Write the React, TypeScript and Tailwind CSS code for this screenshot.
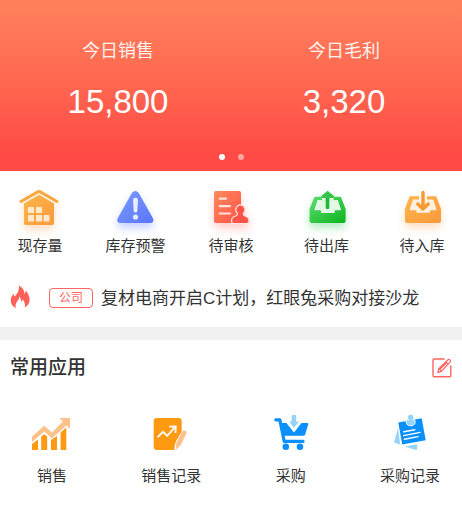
import React, { useState } from 'react';

type Item = { label: string; icon: React.ReactNode };

// Icons of the shortcut row
const StockIcon = () => (
  <svg viewBox="0 0 48 48" className="w-12 h-12 drop-shadow-[0_5px_4px_rgba(255,160,80,0.35)]">
    <defs>
      <linearGradient id="stock" x1="0" y1="0" x2="1" y2="1">
        <stop offset="0" stopColor="#ffb74a" />
        <stop offset="1" stopColor="#f99a3c" />
      </linearGradient>
    </defs>
    <path d="M5 17.5 L22.2 7.6 Q23 7.2 23.8 7.6 L41 17.5" fill="none" stroke="#fba93f" strokeWidth="3" strokeLinecap="round" strokeLinejoin="round" />
    <path d="M8 19.5 L23 10.8 L38 19.5 V39 Q38 41 36 41 H10 Q8 41 8 39 Z" fill="url(#stock)" />
    <g fill="#fff" fillOpacity="0.75">
      <rect x="12" y="23" width="6" height="6" rx="0.6" />
      <rect x="20" y="23" width="6" height="6" rx="0.6" />
      <rect x="12" y="31" width="6" height="6.5" rx="0.6" />
      <rect x="20" y="31" width="6" height="6.5" rx="0.6" />
      <rect x="27.5" y="31" width="6" height="6.5" rx="0.6" />
    </g>
  </svg>
);

const WarningIcon = () => (
  <svg viewBox="0 0 48 48" className="w-12 h-12 drop-shadow-[0_5px_4px_rgba(90,120,255,0.35)]">
    <defs>
      <linearGradient id="warn" x1="0" y1="0" x2="1" y2="1">
        <stop offset="0" stopColor="#7d9bff" />
        <stop offset="1" stopColor="#5a75fb" />
      </linearGradient>
    </defs>
    <path d="M20 8.8 Q23.3 5 26.6 8.8 L40.8 34 Q42.6 38.6 38.4 39 H8.2 Q4 38.6 5.8 34 Z" fill="url(#warn)" />
    <path d="M21 16.2 Q21 13.8 23.5 13.8 Q26 13.8 26 16.2 L25.3 27 Q25.1 28.6 23.5 28.6 Q21.9 28.6 21.7 27 Z" fill="#fff" fillOpacity="0.85" />
    <circle cx="23.5" cy="33" r="2.6" fill="#fff" fillOpacity="0.85" />
  </svg>
);

const ReviewIcon = () => (
  <svg viewBox="0 0 48 48" className="w-12 h-12 drop-shadow-[0_5px_4px_rgba(255,90,80,0.3)]">
    <defs>
      <linearGradient id="review" x1="0" y1="0" x2="1" y2="1">
        <stop offset="0" stopColor="#ff8a5c" />
        <stop offset="1" stopColor="#ff5347" />
      </linearGradient>
    </defs>
    <rect x="7" y="7" width="27" height="32" rx="2" fill="url(#review)" />
    <g stroke="#fff" strokeOpacity="0.8" strokeWidth="2.2" strokeLinecap="round">
      <path d="M12.8 14.7 H19" />
      <path d="M12.8 22.2 H23" />
      <path d="M12.8 29.5 H23" />
    </g>
    <path
      d="M33.4 21.5 A4.2 4.2 0 0 1 35.8 29 V30.6 Q36 31.6 37.4 32.3 L39.8 33.5 Q41.3 34.3 41.3 36 V37.6 Q41.3 39 40 39 H26.5 Q25.2 39 25.2 37.6 V36 Q25.2 34.3 26.7 33.5 L29.3 32.3 Q30.8 31.6 31 30.6 V29 A4.2 4.2 0 0 1 33.4 21.5 Z"
      fill="#ff5347"
      stroke="#ffe3df"
      strokeWidth="2.4"
      paintOrder="stroke"
    />
  </svg>
);

const StockOutIcon = () => (
  <svg viewBox="0 0 48 48" className="w-12 h-12 drop-shadow-[0_5px_4px_rgba(40,200,80,0.35)]">
    <defs>
      <linearGradient id="out" x1="0" y1="0" x2="1" y2="1">
        <stop offset="0" stopColor="#5ddd70" />
        <stop offset="1" stopColor="#0cb41d" />
      </linearGradient>
    </defs>
    <path d="M13.5 17 H35.5 L38 28 V31 H11 V28 Z" fill="#e0f8e4" />
    <path d="M12.5 12.8 H19 V16 H14.6 L11.4 25.2 Q11.2 26.3 12.2 26.3 H17.2 Q18 26.3 18 27.2 V29 H31.6 V27.2 Q31.6 26.3 32.4 26.3 H37.2 Q38.2 26.3 38 25.2 L34.8 16 H30.5 V12.8 H36.5 Q37.8 12.8 38.3 14 L42.6 25 V37 Q42.6 39 40.6 39 H8.6 Q6.6 39 6.6 37 V25 L10.9 14 Q11.3 12.8 12.5 12.8 Z" fill="url(#out)" />
    <path d="M24.5 23.5 V11" stroke="#22b63a" strokeWidth="3.6" strokeLinecap="round" />
    <path d="M24.6 6.8 L31 12 Q31.3 14 29.5 14 H19.7 Q18 14 18.3 12 Z" fill="#36c24b" />
  </svg>
);

const StockInIcon = () => (
  <svg viewBox="0 0 48 48" className="w-12 h-12 drop-shadow-[0_5px_4px_rgba(255,160,80,0.35)]">
    <defs>
      <linearGradient id="in" x1="0" y1="0" x2="1" y2="1">
        <stop offset="0" stopColor="#ffb54a" />
        <stop offset="1" stopColor="#f99a3e" />
      </linearGradient>
    </defs>
    <path d="M13.5 16 H36.5 L39 28 V31 H11 V28 Z" fill="#fdf0de" />
    <path d="M13 12.3 H21 V15.6 H15 L11.8 25.2 Q11.6 26.3 12.6 26.3 H17.6 Q18.4 26.3 18.4 27.2 V28.8 H32 V27.2 Q32 26.3 32.8 26.3 H37.6 Q38.6 26.3 38.4 25.2 L35.2 15.6 H29 V12.3 H37 Q38.2 12.3 38.7 13.5 L43 25 V37 Q43 39 41 39 H9 Q7 39 7 37 V25 L11.3 13.5 Q11.8 12.3 13 12.3 Z" fill="url(#in)" />
    <path d="M25 8.5 V24 M19.8 20 L25 25 L30.2 20" fill="none" stroke="#f79a33" strokeWidth="3.4" strokeLinecap="round" strokeLinejoin="round" />
  </svg>
);

// Icons of the common apps
const SalesIcon = () => (
  <svg viewBox="0 0 48 40" className="w-12 h-10">
    <path d="M4 32 L10 27.6 V38 H4 Z M13.2 24.6 L16.2 22.2 L19.2 24.6 V38 H13.2 Z M23 28 L29 24 V38 H23 Z M32.6 20.4 L38.3 15.4 V38 H32.6 Z" fill="#fd9a12" />
    <path d="M31.3 6 H42 V16.7 L38.6 13.2 L24 26.2 L16.2 19.4 L4 30 V24.6 L16.2 13.8 L24 20.6 L34.8 9.6 Z" fill="#ffc18c" />
  </svg>
);

const SalesRecordIcon = () => (
  <svg viewBox="0 0 48 40" className="w-12 h-10">
    <path d="M9.7 6 H31.7 Q34.7 6 34.7 9 V19.6 L29.4 28.4 Q27.4 32 27.4 38 H9.7 Q6.7 38 6.7 35 V9 Q6.7 6 9.7 6 Z" fill="#fd9a12" />
    <path d="M10.6 25.2 L16 19.8 L20.2 23.8 L28 15.2 M22.3 14.6 L28.7 14.4 L28.5 21" fill="none" stroke="#fff" strokeWidth="1.8" />
    <path d="M35.2 19.6 Q36.3 18.2 38 18.8 Q40 19.8 39.5 21.2 L33.4 33.8 L29 37.4 L29.2 31 Z" fill="#ffc18c" />
  </svg>
);

const PurchaseIcon = () => (
  <svg viewBox="0 0 48 40" className="w-12 h-10">
    <path d="M8.8 7.8 H12.8 L17.2 29.4 H36" fill="none" stroke="#0a90fb" strokeWidth="3.2" strokeLinecap="round" strokeLinejoin="round" />
    <path d="M13.8 11 H19.4 L27 20.4 L34.4 11 H40.4 Q41.7 11 41.3 12.3 L38.2 22.4 Q37.8 23.8 36.4 23.8 H16.6 Z" fill="#0a90fb" />
    <circle cx="18.8" cy="34.7" r="3.3" fill="#0a90fb" />
    <circle cx="33" cy="34.7" r="3.3" fill="#0a90fb" />
    <path d="M24.6 3 H29.2 V9.6 H31.8 L26.9 16 L22.2 9.6 H24.6 Z" fill="#94d4fb" />
  </svg>
);

const PurchaseRecordIcon = () => (
  <svg viewBox="0 0 48 40" className="w-12 h-10">
    <path d="M12 16 L8 30.5 L14.2 32.6 Z" fill="#94d4fb" />
    <path d="M18.5 34.6 L31.4 32.2 L30.8 38.2 Z" fill="#94d4fb" />
    <path d="M12.3 10.5 L35.7 6.3 L39.7 28.2 L16.2 32.4 Z" fill="#0a90fb" />
    <path d="M17.8 19.8 L28.8 17.7 M17.6 23.6 L34 20.4 M18.4 27.2 L32 24.6" stroke="#fff" strokeWidth="1.4" strokeLinecap="round" />
    <g fill="#94d4fb" stroke="#fff" strokeWidth="1.6" paintOrder="stroke">
      <ellipse cx="24.7" cy="10" rx="4.2" ry="3.4" />
      <circle cx="24.7" cy="5.5" r="2.8" />
    </g>
    <path d="M23 6 H26.4 V9 H23 Z" fill="#94d4fb" />
  </svg>
);

const FlameIcon = () => (
  <svg viewBox="0 0 20 24" className="w-5 h-6 shrink-0">
    <path
      d="M9 0.5 C12.6 2.6 14.4 5 14.5 9 C15.4 8.2 15.8 7 15.6 5.2 C18.2 8.4 19.6 11.4 19.6 15 C19.6 18.6 17.4 21.2 14.8 22.6 C15.4 20 14.8 17 12.8 14.4 C12.4 15.4 11.9 16.2 11 16.8 C11.2 14.6 10.6 12.8 9.4 11.4 C9.2 14 7.8 15.6 6.6 17.2 C5.4 19 5.2 21 6 23 C2.6 21.6 0.6 18.8 0.7 15.2 C0.8 12.6 2 10.8 3.6 8.8 C3.7 10 4 10.8 4.8 11.6 C7.4 8.6 9.4 5.4 9 0.5 Z"
      fill="#ff6058"
    />
  </svg>
);

const EditIcon = () => (
  <svg viewBox="0 0 20 20" className="w-5 h-5" fill="none" stroke="#ff6560" strokeWidth="1.4" strokeLinecap="round" strokeLinejoin="round">
    <path d="M12.2 1 H2.2 Q1 1 1 2.2 V17.6 Q1 18.8 2.2 18.8 H17.6 Q18.8 18.8 18.8 17.6 V8" />
    <path d="M16 1.8 Q17 1 18 1.9 Q19 2.9 18.2 3.9 L9.6 13.2 L5.8 14.6 L6.8 10.8 Z M14 4 L16.2 6.1 M6.8 10.8 L9.6 13.2 M8.6 10.6 L14 5.4" strokeWidth="1.2" />
  </svg>
);

const stats = [
  { label: '今日销售', value: '15,800' },
  { label: '今日毛利', value: '3,320' },
];

const shortcuts: Item[] = [
  { label: '现存量', icon: <StockIcon /> },
  { label: '库存预警', icon: <WarningIcon /> },
  { label: '待审核', icon: <ReviewIcon /> },
  { label: '待出库', icon: <StockOutIcon /> },
  { label: '待入库', icon: <StockInIcon /> },
];

const apps: Item[] = [
  { label: '销售', icon: <SalesIcon /> },
  { label: '销售记录', icon: <SalesRecordIcon /> },
  { label: '采购', icon: <PurchaseIcon /> },
  { label: '采购记录', icon: <PurchaseRecordIcon /> },
];

const App = () => {
  const [slide, setSlide] = useState(0);

  return (
    <div className="min-h-screen bg-white text-[#333333] font-['Liberation_Sans','Noto_Sans_CJK_SC',sans-serif]">
      {/* Today's figures */}
      <header className="bg-linear-to-b from-[#ff7f5b] from-5% to-[#ff4a45] to-90% text-white pt-[39px] pb-[11px]">
        <dl className="flex px-[5px]">
          {stats.map((stat) => (
            <div key={stat.label} className="flex-1 text-center">
              <dt className="text-lg leading-6 text-white/90">{stat.label}</dt>
              <dd className="mt-5 text-[33px] leading-[38px]">{stat.value}</dd>
            </div>
          ))}
        </dl>
        <div className="mt-[33px] flex justify-center gap-[13px]">
          {stats.map((stat, index) => (
            <button
              key={stat.label}
              aria-label={stat.label}
              onClick={() => setSlide(index)}
              className={`w-1.5 h-1.5 rounded-full ${slide === index ? 'bg-white' : 'bg-white/50'}`}
            />
          ))}
        </div>
      </header>

      {/* Shortcuts */}
      <nav className="flex justify-between px-2 pt-[13px]">
        {shortcuts.map((item) => (
          <a key={item.label} href="#" className="w-16 flex flex-col items-center">
            {item.icon}
            <span className="mt-1 text-[15px] leading-5 whitespace-nowrap">{item.label}</span>
          </a>
        ))}
      </nav>

      {/* News */}
      <a href="#" className="flex items-end pl-[10px] pt-[29px] pb-4">
        <span className="h-[26px] shrink-0">
          <FlameIcon />
        </span>
        <span className="ml-[19px] mb-[3px] w-11 h-5 shrink-0 rounded-sm border border-[#ff6560] text-center text-xs leading-[18px] text-[#ff6560]">
          公司
        </span>
        <span className="ml-2 text-[17px] leading-6 whitespace-nowrap">复材电商开启C计划，红眼兔采购对接沙龙</span>
      </a>

      {/* Common apps */}
      <section className="border-t-[13px] border-[#f1f1f1]">
        <div className="flex items-center justify-between px-[10px] pt-[14px]">
          <h2 className="text-[19px] leading-7 font-medium">常用应用</h2>
          <button aria-label="编辑">
            <EditIcon />
          </button>
        </div>
        <div className="mt-[30px] flex justify-between px-1">
          {apps.map((item) => (
            <a key={item.label} href="#" className="w-24 flex flex-col items-center">
              {item.icon}
              <span className="mt-[14px] text-[15px] leading-5">{item.label}</span>
            </a>
          ))}
        </div>
      </section>
    </div>
  );
};

export default App;
